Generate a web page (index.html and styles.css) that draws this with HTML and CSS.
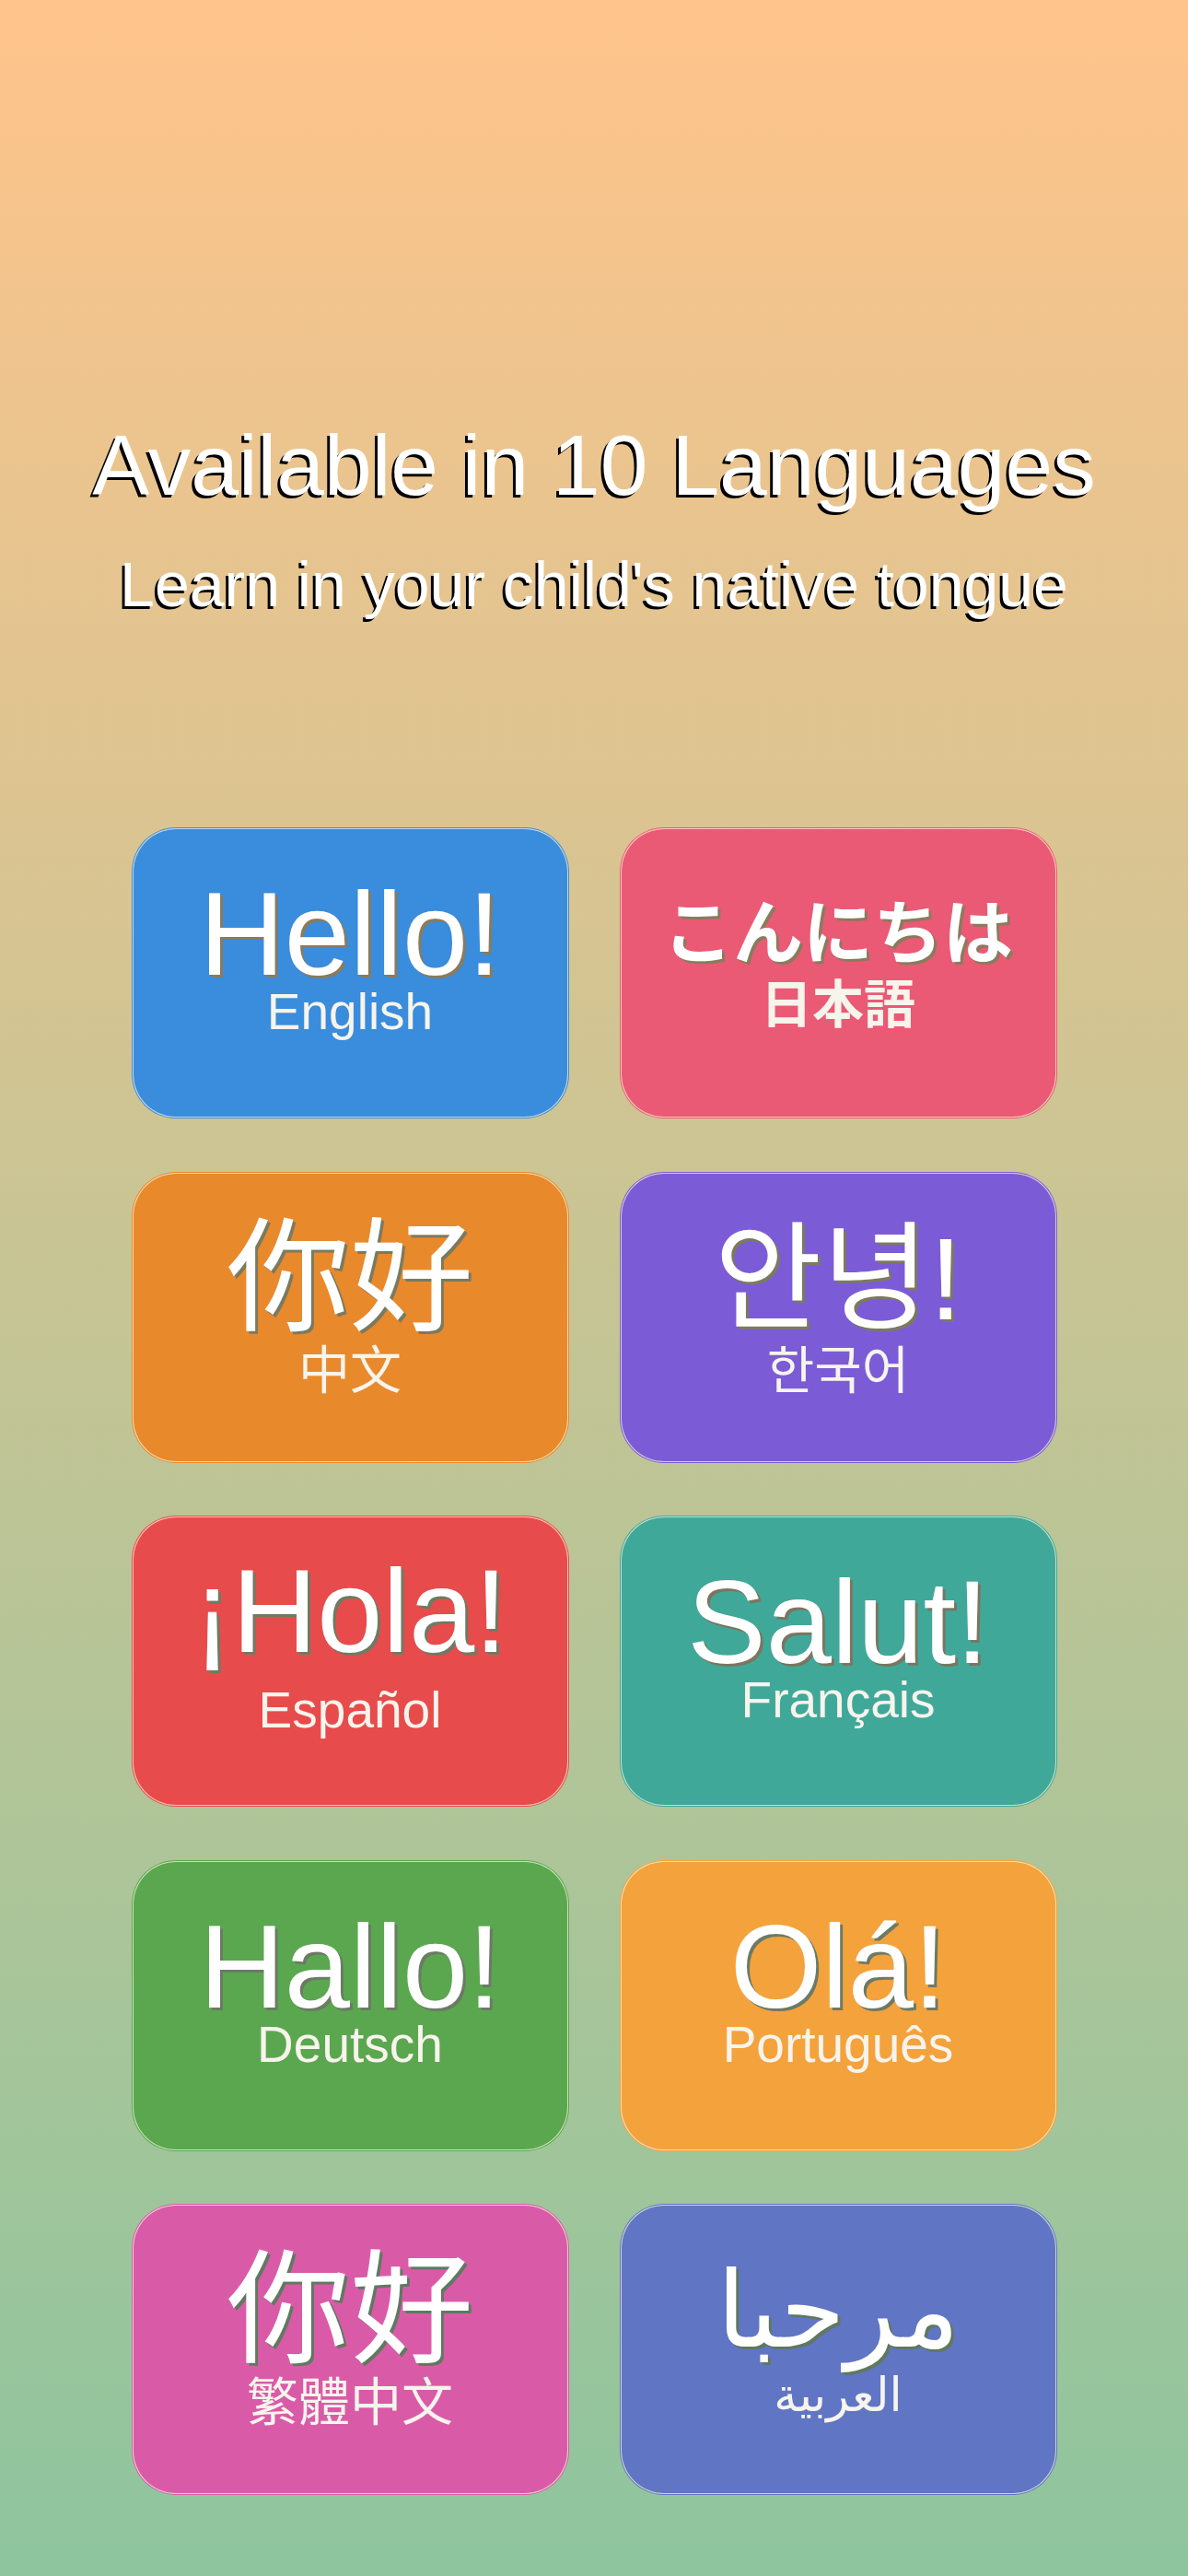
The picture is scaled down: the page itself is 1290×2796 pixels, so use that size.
FILE: index.html
```html
<!DOCTYPE html>
<html lang="en">
<head>
    <meta charset="UTF-8">
    <meta name="viewport" content="width=device-width, initial-scale=1.0">
    <title>Available in 10 Languages</title>
    <link rel="stylesheet" href="styles.css">
</head>
<body>
    <header class="intro">
        <h1 class="intro-title">Available in 10 Languages</h1>
        <p class="intro-sub">Learn in your child's native tongue</p>
    </header>

    <main class="lang-grid">
        <div class="lang-card lang-en">
            <span class="greeting">Hello!</span>
            <span class="lang-name">English</span>
        </div>
        <div class="lang-card lang-ja" lang="ja">
            <span class="greeting">こんにちは</span>
            <span class="lang-name">日本語</span>
        </div>
        <div class="lang-card lang-zh tall" lang="zh-CN">
            <span class="greeting">你好</span>
            <span class="lang-name">中文</span>
        </div>
        <div class="lang-card lang-ko tall" lang="ko">
            <span class="greeting">안녕!</span>
            <span class="lang-name">한국어</span>
        </div>
        <div class="lang-card lang-es">
            <span class="greeting">¡Hola!</span>
            <span class="lang-name">Español</span>
        </div>
        <div class="lang-card lang-fr">
            <span class="greeting">Salut!</span>
            <span class="lang-name">Français</span>
        </div>
        <div class="lang-card lang-de">
            <span class="greeting">Hallo!</span>
            <span class="lang-name">Deutsch</span>
        </div>
        <div class="lang-card lang-pt">
            <span class="greeting">Olá!</span>
            <span class="lang-name">Português</span>
        </div>
        <div class="lang-card lang-tw tall" lang="zh-TW">
            <span class="greeting">你好</span>
            <span class="lang-name">繁體中文</span>
        </div>
        <div class="lang-card lang-ar tall" lang="ar">
            <span class="greeting" dir="rtl">مرحبا</span>
            <span class="lang-name" dir="rtl">العربية</span>
        </div>
    </main>
</body>
</html>
```

FILE: styles.css
```css
html {
    height: 100%;
}
body {
    margin: 0;
    min-height: 100%;
    font-family: "Liberation Sans", Arial, sans-serif;
    background: linear-gradient(to bottom, #ffc48b, #8ec59e);
    color: #fff;
    text-align: center;
}

/* heading */
.intro {
    padding-top: 450px;
}
.intro-title {
    margin: 0;
    font-size: 93px;
    font-weight: 400;
    line-height: 110px;
    text-shadow: -3px 3px 0 #000;
}
.intro-sub {
    margin: 34px 0 0;
    font-size: 68px;
    line-height: 80px;
    text-shadow: -3px 3px 0 #000;
}

/* language cards */
.lang-grid {
    display: grid;
    grid-template-columns: 473px 473px;
    grid-auto-rows: 314px;
    column-gap: 57px;
    row-gap: 59.5px;
    justify-content: center;
    margin-top: 225px;
    padding-bottom: 60px;
}
.lang-card {
    display: flex;
    flex-direction: column;
    align-items: center;
    box-sizing: border-box;
    padding-top: 59px;
    border: 1px solid rgba(255, 250, 225, 0.7);
    border-radius: 47px;
    background-clip: padding-box;
    box-shadow: 0 0 0 1px var(--card);
    background-color: var(--card);
}
.greeting {
    font-size: 128px;
    line-height: 110px;
    color: #fff;
    text-shadow: 3px 3px 0 var(--shade);
    white-space: nowrap;
}
.lang-name {
    font-size: 55px;
    line-height: 58px;
    color: #f7f4ec;
}

.tall .greeting {
    font-size: 134px;
}
.tall .lang-name {
    font-size: 56px;
    line-height: 89px;
}

.lang-ja .greeting,
.lang-ja .lang-name {
    font-family: "Liberation Sans", "Noto Sans CJK JP", sans-serif;
    font-weight: 700;
}
.lang-ja .greeting {
    font-size: 76px;
}
.lang-ja .lang-name {
    font-size: 56px;
    line-height: 43px;
}
.lang-zh {
    font-family: "Liberation Sans", "Noto Sans CJK SC", sans-serif;
}
.lang-tw {
    font-family: "Liberation Sans", "Noto Sans CJK TC", sans-serif;
}
.lang-ko {
    font-family: "Liberation Sans", "Noto Sans CJK KR", sans-serif;
}
.lang-ko .greeting {
    font-size: 127px;
}
.lang-ar {
    font-family: "Liberation Sans", "DejaVu Sans", sans-serif;
}
.lang-ar .greeting {
    font-size: 114px;
}
.lang-ar .lang-name {
    font-size: 51px;
    line-height: 74px;
}

.lang-es .greeting {
    margin-top: -12px;
}
.lang-es .lang-name {
    line-height: 104px;
}

.lang-en { --card: #3a8cdc; --shade: #8a7b5c; }
.lang-ja { --card: #ea5a75; --shade: #8a7b5c; }
.lang-zh { --card: #e8892c; --shade: #7b7a5f; }
.lang-ko { --card: #7b5cd6; --shade: #7b7a5f; }
.lang-es { --card: #e84b4b; --shade: #6f7a62; }
.lang-fr { --card: #40a899; --shade: #7a7660; }
.lang-de { --card: #5aa74f; --shade: #6c7a66; }
.lang-pt { --card: #f4a23c; --shade: #6c7a66; }
.lang-tw { --card: #d95ba8; --shade: #617862; }
.lang-ar { --card: #6075c4; --shade: #5f7860; }
```
